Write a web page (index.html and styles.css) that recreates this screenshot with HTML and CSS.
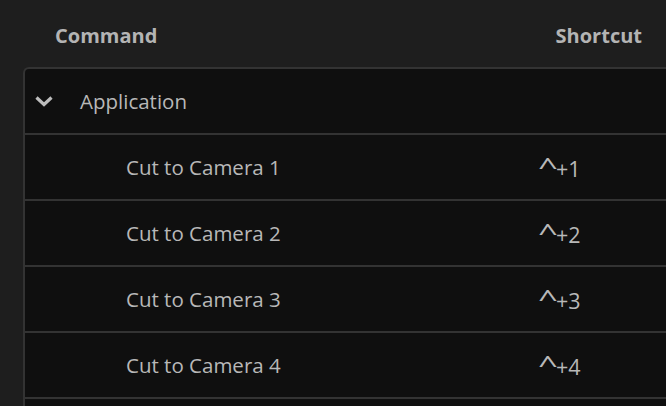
FILE: index.html
```html
<!DOCTYPE html>
<html>
<head>
<meta charset="utf-8">
<link rel="stylesheet" href="styles.css">
</head>
<body>
<div class="header">
  <span class="h-command">Command</span>
  <span class="h-shortcut">Shortcut</span>
</div>
<div class="panel">
  <div class="row group">
    <svg class="chev" width="20" height="12" viewBox="0 0 20 12"><path d="M2.5 2.5 L10 9.5 L17.5 2.5" fill="none" stroke="#bdbdbd" stroke-width="3.2" stroke-linecap="butt" stroke-linejoin="miter"/></svg>
    <span class="g-label">Application</span>
  </div>
  <div class="row item"><span class="cmd">Cut to Camera 1</span><span class="key"><span class="caret">^</span>+1</span></div>
  <div class="row item"><span class="cmd">Cut to Camera 2</span><span class="key"><span class="caret">^</span>+2</span></div>
  <div class="row item"><span class="cmd">Cut to Camera 3</span><span class="key"><span class="caret">^</span>+3</span></div>
  <div class="row item"><span class="cmd">Cut to Camera 4</span><span class="key"><span class="caret">^</span>+4</span></div>
</div>
</body>
</html>
```
FILE: styles.css
```css
html, body {
  margin: 0;
  padding: 0;
  height: 100%;
  overflow: hidden;
}
body {
  background: #1e1e1e;
  font-family: "Open Sans", "Noto Sans", sans-serif;
  color: #b8b8b8;
  display: flex;
  flex-direction: column;
}
.header {
  height: 67px;
  flex: none;
  display: flex;
  align-items: center;
  justify-content: space-between;
  padding: 0 24px 0 55px;
  box-sizing: border-box;
  font-size: 20px;
  font-weight: 700;
  color: #b4b4b4;
}
.header span {
  position: relative;
  top: 2px;
}
.panel {
  flex: 1;
  margin-left: 23px;
  width: 680px;
  background: #0f0f0f;
  border-top: 2px solid #333;
  border-left: 2px solid #333;
  border-top-left-radius: 6px;
}
.row {
  height: 64px;
  border-bottom: 2px solid #333;
  display: flex;
  align-items: center;
  font-size: 20.5px;
}
.group {
  padding-left: 9px;
}
.chev {
  margin-right: 26px;
}
.item {
  padding-left: 101px;
}
.cmd {
  width: 412px;
}
.key {
  display: flex;
  align-items: baseline;
  font-size: 21.5px;
}
.caret {
  display: inline-block;
  font-size: 24px;
  transform: scaleX(1.45);
  transform-origin: left center;
  position: relative;
  top: -2px;
  width: 18px;
}
```
